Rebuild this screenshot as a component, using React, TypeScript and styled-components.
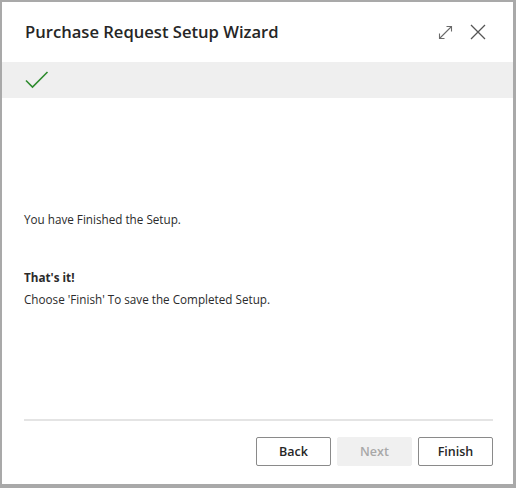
import styled, { createGlobalStyle } from 'styled-components'

const GlobalStyle = createGlobalStyle`
  html, body {
    margin: 0;
    padding: 0;
    background: #a9a9a9;
    font-family: "Open Sans", "Noto Sans", "Liberation Sans", sans-serif;
    color: #212121;
  }
`

const Dialog = styled.div`
  margin: 2px 0 0 2px;
  width: 511px;
  height: 482px;
  background: #fff;
  display: flex;
  flex-direction: column;
  box-sizing: border-box;
`

const Header = styled.div`
  display: flex;
  align-items: center;
  height: 60px;
  padding: 0 27px 0 23px;
`

const Title = styled.h1`
  flex: 1;
  margin: 0 0 2px;
  font-size: 16.6px;
  font-weight: 600;
  color: #262626;
`

const IconButton = styled.button`
  background: none;
  border: none;
  padding: 0;
  margin-left: 15px;
  width: 17px;
  height: 17px;
  display: flex;
  align-items: center;
  justify-content: center;
  cursor: pointer;
`

const StepBand = styled.div`
  height: 36px;
  background: #efefef;
  display: flex;
  align-items: center;
  padding-left: 23px;
`

const Content = styled.div`
  flex: 1;
  padding: 112px 22px 0;
  font-size: 11.7px;
  color: #2b2b2b;
`

const Line = styled.p<{ $bold?: boolean; $gap?: number }>`
  margin: ${p => p.$gap ?? 0}px 0 0;
  font-weight: ${p => (p.$bold ? 700 : 400)};
  line-height: 18px;
`

const Footer = styled.div`
  margin: 0 20px 0 22px;
  border-top: 2px solid #e4e4e4;
  padding: 16px 0 18px;
  display: flex;
  justify-content: flex-end;
  gap: 6px;
`

const Button = styled.button<{ $disabled?: boolean }>`
  width: 75px;
  height: 29px;
  box-sizing: border-box;
  font-family: "Open Sans", "Noto Sans", sans-serif;
  font-size: 12.5px;
  font-weight: 600;
  color: ${p => (p.$disabled ? '#a8a8a8' : '#262626')};
  background: ${p => (p.$disabled ? '#f0f0f0' : '#fff')};
  border: 1px solid ${p => (p.$disabled ? '#f0f0f0' : '#8a8a8a')};
  border-radius: 2px;
  cursor: ${p => (p.$disabled ? 'default' : 'pointer')};
`

export default function App() {
  return (
    <>
      <GlobalStyle />
      <Dialog>
        <Header>
          <Title>Purchase Request Setup Wizard</Title>
          <IconButton aria-label="Expand">
            <svg width="15" height="15" viewBox="0 0 15 15" fill="none" stroke="#6a6a6a" strokeWidth="1.1">
              <path d="M1.5 13.5 L13.5 1.5" />
              <path d="M8.5 1.5 H13.5 V6.5" />
              <path d="M1.5 8.5 V13.5 H6.5" />
            </svg>
          </IconButton>
          <IconButton aria-label="Close">
            <svg width="16" height="16" viewBox="0 0 16 16" fill="none" stroke="#555" strokeWidth="1.3">
              <path d="M1 1 L15 15 M15 1 L1 15" />
            </svg>
          </IconButton>
        </Header>
        <StepBand>
          <svg width="24" height="18" viewBox="0 0 24 18" fill="none" stroke="#2e8b2e" strokeWidth="1.6">
            <path d="M1 9.5 L7.5 16 L22.5 1" />
          </svg>
        </StepBand>
        <Content>
          <Line>You have Finished the Setup.</Line>
          <Line $bold $gap={40}>That's it!</Line>
          <Line $gap={4}>Choose 'Finish' To save the Completed Setup.</Line>
        </Content>
        <Footer>
          <Button>Back</Button>
          <Button $disabled disabled>Next</Button>
          <Button>Finish</Button>
        </Footer>
      </Dialog>
    </>
  )
}
